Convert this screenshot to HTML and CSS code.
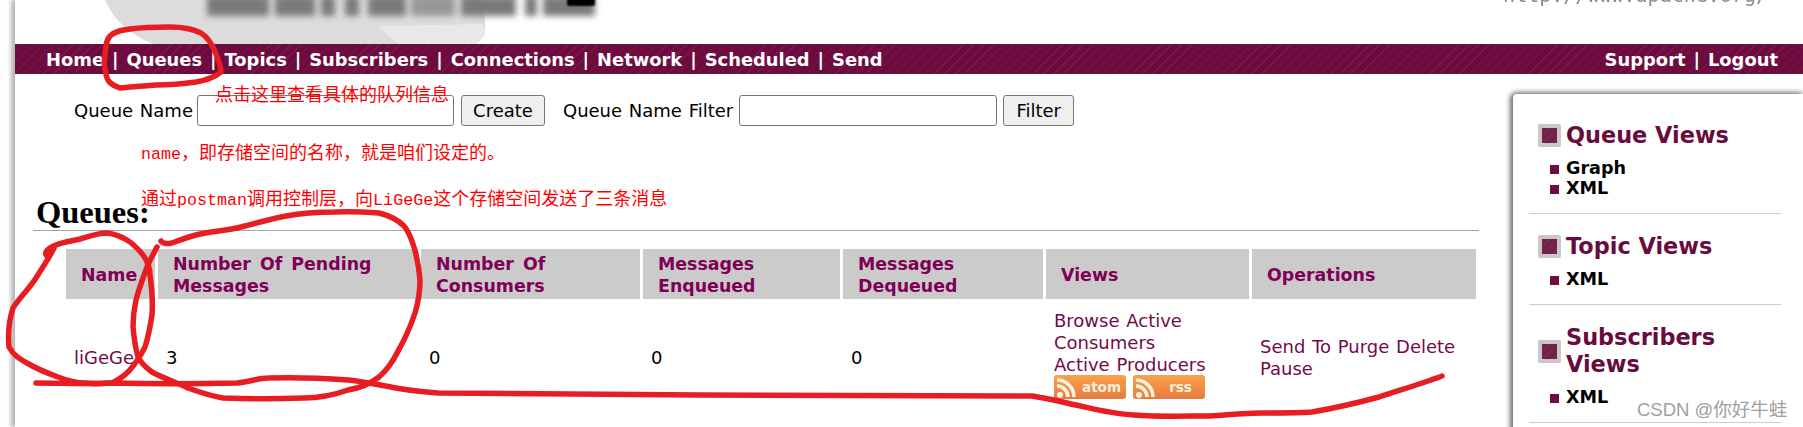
FILE: index.html
```html
<!DOCTYPE html>
<html lang="en">
<head>
<meta charset="utf-8">
<title>Queues</title>
<link rel="stylesheet" href="styles.css">
</head>
<body>
<div class="page">
  <header class="banner">
    <svg class="logo" width="640" height="44" viewBox="0 0 640 44" aria-hidden="true">
      <defs>
        <filter id="b1" x="-10%" y="-40%" width="120%" height="180%"><feGaussianBlur stdDeviation="3.2"/></filter>
        <filter id="b2"><feGaussianBlur stdDeviation="1"/></filter>
      </defs>
      <path d="M92 0 H470 L472 22 Q474 38 462 44 H140 Q105 30 92 0Z" fill="#dcdcdc"/>
      <path d="M365 26 L470 24 L472 36 L460 44 H385Z" fill="#e8e8e8"/>
      <g filter="url(#b1)" fill="#7a7a7a">
        <rect x="194" y="-4" width="62" height="20"/>
        <rect x="262" y="-4" width="40" height="20"/>
        <rect x="308" y="-4" width="14" height="20"/>
        <rect x="332" y="-4" width="14" height="20"/>
        <rect x="355" y="-4" width="38" height="20"/>
        <rect x="398" y="-4" width="44" height="20" fill="#979797"/>
        <rect x="448" y="-4" width="55" height="20"/>
        <rect x="512" y="-4" width="12" height="20"/>
        <rect x="530" y="-4" width="52" height="20"/>
      </g>
      <rect x="554" y="-4" width="28" height="10" rx="2" fill="#000" filter="url(#b2)"/>
    </svg>
    <span class="site-url">http://www.apache.org/</span>
  </header>
  <nav class="menu">
    <div class="menu-group"><a>Home</a> | <a>Queues</a> | <a>Topics</a> | <a>Subscribers</a> | <a>Connections</a> | <a>Network</a> | <a>Scheduled</a> | <a>Send</a></div>
    <div class="menu-group"><a>Support</a> | <a>Logout</a></div>
  </nav>
  <div class="main">
    <main class="content">
      <form class="queue-form">
        <label class="field-label">Queue Name</label>
        <input class="field field-name" type="text">
        <button class="btn btn-create" type="button">Create</button>
        <label class="field-label filter-label">Queue Name Filter</label>
        <input class="field field-filter" type="text">
        <button class="btn btn-filter" type="button">Filter</button>
      </form>
      <h2 class="title">Queues:</h2>
      <hr class="rule">
      <table class="queues">
        <colgroup>
          <col class="c1"><col class="c2"><col class="c3"><col class="c4"><col class="c5"><col class="c6"><col class="c7">
        </colgroup>
        <thead>
          <tr>
            <th>Name</th>
            <th>Number Of Pending Messages</th>
            <th>Number Of Consumers</th>
            <th>Messages Enqueued</th>
            <th>Messages Dequeued</th>
            <th>Views</th>
            <th>Operations</th>
          </tr>
        </thead>
        <tbody>
          <tr>
            <td><a>liGeGe</a></td>
            <td>3</td>
            <td>0</td>
            <td>0</td>
            <td>0</td>
            <td class="views-cell">
              <a>Browse Active Consumers</a><br><a>Active Producers</a>
              <div class="feeds">
                <span class="feed"><svg width="22" height="22" viewBox="0 0 22 22" aria-hidden="true"><circle cx="5" cy="18" r="3" fill="#fff3df"/><path d="M2 9a11 11 0 0 1 11 11M2 3a17 17 0 0 1 17 17" fill="none" stroke="#fff3df" stroke-width="3.6"/></svg><b class="feed-name">atom</b></span>
                <span class="feed"><svg width="22" height="22" viewBox="0 0 22 22" aria-hidden="true"><circle cx="5" cy="18" r="3" fill="#fff3df"/><path d="M2 9a11 11 0 0 1 11 11M2 3a17 17 0 0 1 17 17" fill="none" stroke="#fff3df" stroke-width="3.6"/></svg><b class="feed-name">rss</b></span>
              </div>
            </td>
            <td><a>Send To</a> <a>Purge</a> <a>Delete</a> <a>Pause</a></td>
          </tr>
        </tbody>
      </table>
    </main>
    <aside class="side">
      <section class="side-box">
        <h3 class="side-title"><i class="side-icon"></i><span>Queue Views</span></h3>
        <ul class="side-list"><li>Graph</li><li>XML</li></ul>
      </section>
      <section class="side-box box-mid">
        <h3 class="side-title"><i class="side-icon"></i><span>Topic Views</span></h3>
        <ul class="side-list"><li>XML</li></ul>
      </section>
      <section class="side-box box-last">
        <h3 class="side-title"><i class="side-icon"></i><span>Subscribers<br>Views</span></h3>
        <ul class="side-list"><li>XML</li></ul>
      </section>
    </aside>
  </div>
</div>

<svg class="ink" width="1803" height="427" viewBox="0 0 1803 427" aria-hidden="true">
  <path d="M120 88C112 85 107 82 106 74C104 66 104 60 105 55C106 46 106 40 110 36C116 31 122 30 130 29C145 27 158 27 170 27C183 27 193 29 201 33C209 38 213 46 216 54C219 61 221 67 221 72C214 78 206 80 196 82C182 84 168 85 156 85C143 86 130 87 120 88"/>
  <path d="M47 256C44 253 46 249 56 245C64 242 72 241 80 239C90 236 98 233 107 233C116 234 122 237 127 240C135 245 139 250 143 255C148 262 150 268 150 275C152 290 153 302 152 315C150 328 148 338 145 347C140 357 135 364 129 371C124 376 118 380 112 383"/>
  <path d="M54 248C48 260 42 268 36 278C29 289 20 297 13 308C9 320 8 335 9 347C14 356 20 359 27 363C37 369 47 373 58 377C68 381 76 383 85 383C93 384 101 384 109 383"/>
  <path d="M161 241C163 244 167 244 172 243C180 240 188 237 196 235C211 231 226 231 241 227C256 223 271 219 286 216C302 213 318 212 335 212C351 211 366 212 379 213C391 216 398 220 404 226C409 232 411 238 413 244C417 256 419 268 420 280C420 292 418 303 415 313C410 328 404 341 397 353C392 363 386 371 379 377C370 384 360 388 348 390C334 395 319 398 304 398C277 399 250 399 223 398C211 396 199 392 188 388C175 382 163 378 152 372C145 367 141 363 138 357C135 347 134 337 133 327C133 318 134 309 136 300C139 288 143 278 147 267C150 260 154 253 157 247"/>
  <path d="M36 383C62 383 87 384 112 383C154 384 196 384 237 383C250 382 258 378 268 378C295 377 321 378 348 380C367 382 384 386 402 389C414 391 426 392 438 393C524 393 610 394 700 395C811 395 922 395 1032 396C1044 398 1055 400 1067 403C1090 408 1110 414 1134 415C1160 417 1185 416 1210 416C1227 415 1244 413 1261 413C1278 413 1295 413 1312 412C1335 408 1357 403 1379 397C1400 390 1421 384 1442 376"/>
</svg>
<p class="note note-1">点击这里查看具体的队列信息</p>
<p class="note note-2"><span class="latin">name</span>，即存储空间的名称，就是咱们设定的。</p>
<p class="note note-3">通过<span class="latin">postman</span>调用控制层，向<span class="latin">LiGeGe</span>这个存储空间发送了三条消息</p>
<div class="watermark">CSDN @你好牛蛙</div>
</body>
</html>
```
FILE: styles.css
```css
* { box-sizing: border-box; }
html, body { margin: 0; padding: 0; height: 427px; overflow: hidden; background: #fff; }
body { font-family: "DejaVu Sans", Verdana, sans-serif; font-size: 18px; word-spacing: 1px; color: #000; position: relative; }
.page { margin-left: 15px; height: 427px; background: #fff; box-shadow: -4px 0 4px rgba(120,120,120,.55); }

.banner { height: 44px; display: flex; justify-content: space-between; overflow: hidden; }
.logo { margin-left: -2px; flex: none; overflow: hidden; }
.site-url { font-family: "DejaVu Sans Mono", monospace; font-size: 20px; line-height: 20px; color: #8a8a8a; margin: -15px 35px 0 0; filter: blur(.5px); }

.menu { height: 30px; display: flex; justify-content: space-between; align-items: center; padding: 0 25px 0 31px; color: #fff; font-weight: 700; font-size: 17.9px; word-spacing: 1.7px; white-space: pre;
  background: repeating-linear-gradient(135deg, #6e0b3e 0 6px, #751a4a 6px 7px); }

.main { display: flex; align-items: flex-start; }
.content { flex: 1; min-width: 0; padding-left: 18px; }
.queue-form { display: flex; align-items: center; padding: 21px 0 0 41px; height: 52px; }
.field-label { white-space: nowrap; }
.field { height: 31px; border: 1px solid #767676; border-radius: 3px; background: #fff; padding: 0; }
.field-name { width: 257px; margin-left: 4px; }
.field-filter { width: 258px; margin-left: 6px; }
.btn { height: 31px; border: 1px solid #767676; border-radius: 3px; background: #efefef; font: inherit; padding: 0; color: #000; }
.btn-create { width: 84px; margin-left: 7px; }
.btn-filter { width: 71px; margin-left: 6px; }
.filter-label { margin-left: 18px; }

.title { font-family: "Liberation Serif", serif; font-size: 32.5px; line-height: 36px; font-weight: 700; margin: 68px 0 0 3px; }
.rule { border: 0; border-top: 1px solid #a6a6a6; margin: 0; width: 1446px; height: 0; }

.queues { border-collapse: separate; border-spacing: 3px; table-layout: fixed; width: 1416px; margin: 15px 0 0 30px; }
.c1 { width: 89px; } .c2 { width: 260px; } .c3 { width: 219px; } .c4 { width: 197px; } .c5 { width: 200px; } .c6 { width: 203px; } .c7 { width: 224px; }
.queues th { background: #cbcbcb; color: #800055; font-weight: 700; font-size: 17.4px; word-spacing: 3px; line-height: 22px; text-align: left; padding: 4px 4px 2px 15px; height: 50px; vertical-align: middle; }
.queues td { padding: 8px 7px 9px 8px; line-height: 22px; vertical-align: middle; }
.queues .views-cell { padding-bottom: 15px; vertical-align: top; }
.queues a { color: #75094a; }
.feeds { display: flex; gap: 7px; margin-top: -1px; }
.feed { width: 72px; height: 24px; border-radius: 3px; background: linear-gradient(#f9a24c, #e67b3d); display: flex; align-items: center; color: #fdeedd; overflow: hidden; }
.feed svg { flex: none; margin: 1px 0 0 1px; }
.feed-name { flex: 1; text-align: center; font-size: 13.5px; line-height: 24px; }

.side { flex: none; width: 290px; margin-top: 20px; padding-top: 10px; background: #fff; border-top-left-radius: 4px; box-shadow: -3px 0 5px rgba(60,60,60,.7), 0 -3px 4px rgba(120,120,120,.45); min-height: 340px; }
.side-box { margin: 0 22px 0 16px; padding: 18px 0 15px; border-bottom: 1px solid #cccccc; }
.box-mid { padding-top: 19px; }
.box-last { padding-top: 19px; }
.side-title { display: flex; align-items: center; gap: 5px; margin: 0 0 9px; padding-left: 9px; font-size: 22.4px; word-spacing: 0; line-height: 27px; font-weight: 700; color: #690b3c; }
.side-icon { flex: none; width: 23px; height: 23px; border: 4px solid #cbc6c8; border-radius: 2px; background: repeating-linear-gradient(135deg, #722247 0 5px, #7d3058 5px 6px); }
.side-list { list-style: none; margin: 0; padding: 0 0 0 21px; }
.side-list li { display: flex; align-items: center; gap: 7px; height: 20px; font-weight: 700; font-size: 17.6px; line-height: 20px; }
.side-list li::before { content: ""; flex: none; width: 9px; height: 9px; background: #6e0d3f; margin-top: 2px; }

.ink { position: absolute; left: 0; top: 0; fill: none; stroke: #e81d22; stroke-width: 5.5; stroke-linecap: round; stroke-linejoin: round; pointer-events: none; }
.note { position: absolute; margin: 0; color: #f00; font-family: "Noto Sans CJK SC", sans-serif; font-size: 18px; word-spacing: 0; line-height: 24px; white-space: nowrap; }
.latin { font-family: "Liberation Mono", monospace; font-size: 16.7px; }
.note-1 { left: 215px; top: 81px; }
.note-2 { left: 141px; top: 139px; }
.note-3 { left: 141px; top: 185px; }
.watermark { position: absolute; left: 1637px; top: 398px; font-family: "Liberation Sans", "Noto Sans CJK SC", sans-serif; font-size: 18.5px; word-spacing: 0; line-height: 24px; color: #a0a0a0; text-shadow: 0 0 2px #fff; white-space: nowrap; }
```
